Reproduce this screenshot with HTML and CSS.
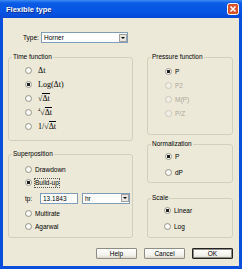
FILE: index.html
```html
<!DOCTYPE html>
<html>
    <head>
        <title>Flexible type</title>
        <link rel="stylesheet" href="styles.css">
    </head>
    <body>
        <div class="window">
            <div class="titlebar">
                <span class="title">Flexible type</span>
                <span class="close">
                    <svg width="12" height="12" viewBox="0 0 12 12">
                        <rect x="0.5" y="0.5" width="11" height="11" rx="2" fill="#d9542b" stroke="#fff"/>
                        <path d="M3.5 3.5 L8.5 8.5 M8.5 3.5 L3.5 8.5" stroke="#fff" stroke-width="1.6"/>
                    </svg>
                </span>
            </div>
            <div class="client">
                <div class="type-row">
                    <span class="type-label">Type:</span>
                    <div class="combo type-combo">
                        <span class="combo-text">Horner</span>
                        <span class="combo-btn"></span>
                    </div>
                </div>

                <div class="columns">
                    <div class="col col-left">
                        <fieldset class="grp time">
                            <legend>Time function</legend>
                            <div class="grp-body">
                                <label class="opt"><input type="radio" name="tf"><span class="math">&Delta;t</span></label>
                                <label class="opt"><input type="radio" name="tf" checked><span class="math">Log(&Delta;t)</span></label>
                                <label class="opt"><input type="radio" name="tf"><span class="math">&radic;<span class="over">&Delta;t</span></span></label>
                                <label class="opt"><input type="radio" name="tf"><span class="math"><span class="idx">4</span>&radic;<span class="over">&Delta;t</span></span></label>
                                <label class="opt"><input type="radio" name="tf"><span class="math">1/&radic;<span class="over">&Delta;t</span></span></label>
                            </div>
                        </fieldset>

                        <fieldset class="grp super">
                            <legend>Superposition</legend>
                            <div class="grp-body">
                                <label class="opt"><input type="radio" name="sp"><span>Drawdown</span></label>
                                <label class="opt"><input type="radio" name="sp" checked><span class="focus">Build-up</span></label>
                                <div class="tp-row">
                                    <span class="tp-label">tp:</span>
                                    <input class="field" type="text" value="13.1843">
                                    <div class="combo unit-combo">
                                        <span class="combo-text">hr</span>
                                        <span class="combo-btn"></span>
                                    </div>
                                </div>
                                <label class="opt"><input type="radio" name="sp"><span>Multirate</span></label>
                                <label class="opt"><input type="radio" name="sp"><span>Agarwal</span></label>
                            </div>
                        </fieldset>
                    </div>

                    <div class="col col-right">
                        <fieldset class="grp pressure">
                            <legend>Pressure function</legend>
                            <div class="grp-body">
                                <label class="opt"><input type="radio" name="pf" checked><span>P</span></label>
                                <label class="opt off"><input type="radio" name="pf" disabled><span>P2</span></label>
                                <label class="opt off"><input type="radio" name="pf" disabled><span>M(P)</span></label>
                                <label class="opt off"><input type="radio" name="pf" disabled><span>P/Z</span></label>
                            </div>
                        </fieldset>

                        <fieldset class="grp norm">
                            <legend>Normalization</legend>
                            <div class="grp-body">
                                <label class="opt"><input type="radio" name="nm" checked><span>P</span></label>
                                <label class="opt"><input type="radio" name="nm"><span>dP</span></label>
                            </div>
                        </fieldset>

                        <fieldset class="grp scale">
                            <legend>Scale</legend>
                            <div class="grp-body">
                                <label class="opt"><input type="radio" name="sc" checked><span>Linear</span></label>
                                <label class="opt"><input type="radio" name="sc"><span>Log</span></label>
                            </div>
                        </fieldset>
                    </div>
                </div>

                <div class="buttons">
                    <button class="btn">Help</button>
                    <button class="btn">Cancel</button>
                    <button class="btn default">OK</button>
                </div>
            </div>
        </div>
    </body>
</html>
```

FILE: styles.css
```css
body {
    margin: 0;
    font-family: "Liberation Sans", Arial, sans-serif;
    font-size: 6.5px;
    color: #000;
}

.window {
    width: 242px;
    height: 269px;
    display: flex;
    flex-direction: column;
    background-color: #0a4fdc;
}

.titlebar {
    height: 18px;
    flex: none;
    display: flex;
    align-items: center;
    justify-content: space-between;
    padding: 0 3px 0 6px;
    background: linear-gradient(#3d8cf5 0, #0a5be6 3px, #0655e4 12px, #0448d4 18px);
}

.title {
    color: #fff;
    font-weight: bold;
    font-size: 7.5px;
    text-shadow: 1px 1px 0 #0a2a8a;
}

.close {
    display: flex;
}

.client {
    flex: 1;
    margin: 0 3px 3px;
    background-color: #ece9d8;
    padding: 14px 6px 0 5px;
    display: flex;
    flex-direction: column;
}

.type-row {
    display: flex;
    align-items: center;
    height: 11px;
    padding-left: 15px;
}

.type-label {
    width: 18px;
}

.combo {
    display: flex;
    align-items: center;
    justify-content: space-between;
    box-sizing: border-box;
    height: 11px;
    border: 1px solid #7f9db9;
    background-color: #fff;
    padding-left: 2px;
}

.type-combo {
    width: 87px;
}

.unit-combo {
    width: 48px;
    margin-left: 4px;
}

.combo-btn {
    width: 8px;
    height: 8px;
    box-sizing: border-box;
    border: 1px solid #a0a0a0;
    background: #e8e6de;
    position: relative;
}

.combo-btn::after {
    content: "";
    position: absolute;
    left: 1px;
    top: 2px;
    border-left: 2px solid transparent;
    border-right: 2px solid transparent;
    border-top: 2px solid #000;
}

.columns {
    display: flex;
    gap: 14px;
    margin-top: 10px;
}

.col {
    display: flex;
    flex-direction: column;
}

.col-left {
    width: 125px;
}

.col-right {
    width: 86px;
}

.grp {
    margin: 0;
    padding: 0;
    box-sizing: border-box;
    border: 1px solid #d0d0bf;
    border-radius: 3px;
    min-width: 0;
}

.grp legend {
    padding: 0 1px;
    margin-left: 3px;
    line-height: 8px;
}

.time {
    height: 88px;
}

.time .grp-body {
    padding: 2px 0 0 16px;
}

.super {
    height: 88px;
    margin-top: 9px;
}

.super .grp-body {
    padding: 5px 0 0 16px;
}

.pressure {
    height: 82px;
}

.pressure .grp-body {
    padding: 3px 0 0 17px;
}

.norm {
    height: 43px;
    margin-top: 5px;
}

.norm .grp-body {
    padding-left: 17px;
}

.scale {
    height: 44px;
    margin-top: 11px;
}

.scale .grp-body {
    padding-left: 16px;
}

.opt {
    display: flex;
    align-items: center;
    gap: 3px;
    height: 13px;
}

.time .opt {
    height: 14px;
    gap: 6px;
}

.pressure .opt {
    height: 14px;
}

.norm .opt,
.scale .opt {
    height: 16px;
}

.opt.off {
    color: #aca899;
}

.opt input {
    appearance: none;
    -webkit-appearance: none;
    margin: 0;
    flex: none;
    width: 7px;
    height: 7px;
    box-sizing: border-box;
    border: 1px solid #9c9a8e;
    border-radius: 50%;
    background: radial-gradient(circle, #fff 40%, #dedbd0);
}

.opt input:checked {
    background: radial-gradient(circle, #1b1b1b 0 1.4px, #fff 1.6px 45%, #dedbd0);
}

.opt input:disabled {
    border-color: #cac8bb;
    background: #f1efe6;
}

.math {
    font-family: "Liberation Serif", "Times New Roman", serif;
    font-size: 8px;
    display: flex;
    align-items: baseline;
}

.idx {
    font-size: 4.5px;
    align-self: flex-start;
    line-height: 5px;
}

.over {
    border-top: 1px solid #000;
}

.focus {
    display: inline-block;
    line-height: 8px;
    outline: 1px dotted #555;
}

.tp-row {
    display: flex;
    align-items: center;
    height: 18px;
}

.tp-label {
    width: 15px;
}

.field {
    width: 38px;
    height: 11px;
    box-sizing: border-box;
    margin: 0;
    border: 1px solid #7f9db9;
    padding: 0 2px;
    font-family: "Liberation Sans", Arial, sans-serif;
    font-size: 6.5px;
}

.buttons {
    display: flex;
    justify-content: flex-end;
    gap: 7px;
    margin-top: 10px;
}

.btn {
    width: 41px;
    height: 11px;
    padding: 0;
    font-family: "Liberation Sans", Arial, sans-serif;
    font-size: 6.5px;
    border: 1px solid #8f8d84;
    border-radius: 1px;
    background: linear-gradient(#fff, #f2f1ea 70%, #dcd8cc);
}

.btn.default {
    border-color: #222;
    box-shadow: inset 0 0 0 1px #8f8d84;
}
```
